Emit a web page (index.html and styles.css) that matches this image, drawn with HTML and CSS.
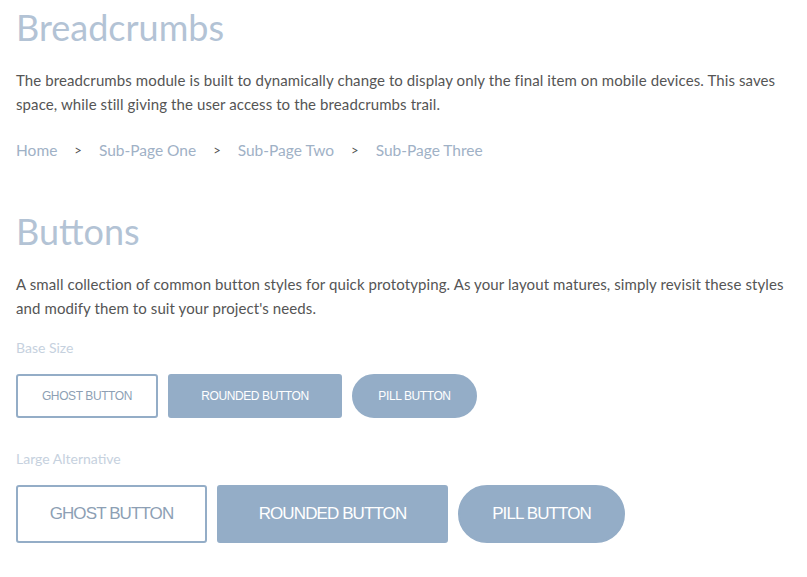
FILE: index.html
```html
<!DOCTYPE html>
<html lang="en">
<head>
    <meta charset="UTF-8">
    <meta name="viewport" content="width=device-width, initial-scale=1.0">
    <title>Breadcrumbs &amp; Buttons</title>
    <link rel="stylesheet" href="styles.css">
</head>
<body>

    <section class="module">
        <h1 class="module-title">Breadcrumbs</h1>
        <p class="module-text">The breadcrumbs module is built to dynamically change to display only the final item on mobile devices. This saves space, while still giving the user access to the breadcrumbs trail.</p>

        <nav class="breadcrumbs">
            <a href="#">Home</a>
            <span class="sep">&gt;</span>
            <a href="#">Sub-Page One</a>
            <span class="sep">&gt;</span>
            <a href="#">Sub-Page Two</a>
            <span class="sep">&gt;</span>
            <a href="#">Sub-Page Three</a>
        </nav>
    </section>

    <section class="module buttons-module">
        <h1 class="module-title">Buttons</h1>
        <p class="module-text">A small collection of common button styles for quick prototyping. As your layout matures, simply revisit these styles and modify them to suit your project's needs.</p>

        <h4 class="label">Base Size</h4>
        <div class="btn-row">
            <button class="btn btn-ghost">Ghost Button</button>
            <button class="btn btn-rounded">Rounded Button</button>
            <button class="btn btn-pill">Pill Button</button>
        </div>

        <h4 class="label">Large Alternative</h4>
        <div class="btn-row">
            <button class="btn btn-large btn-ghost">Ghost Button</button>
            <button class="btn btn-large btn-rounded">Rounded Button</button>
            <button class="btn btn-large btn-pill">Pill Button</button>
        </div>
    </section>

</body>
</html>
```

FILE: styles.css
```css
body {
    margin: 0;
    padding: 0 16px;
    background: #FFFFFF;
    font-family: Lato, "Open Sans", sans-serif;
    color: #555;
}
.module-title {
    margin: 0;
    padding-top: 7px;
    font-size: 36px;
    font-weight: 400;
    line-height: 40px;
    color: #b3c3d5;
}
.module-text {
    margin: 21px 0 0;
    font-size: 15px;
    letter-spacing: 0.1px;
    line-height: 24px;
    color: #555;
}
.breadcrumbs {
    display: flex;
    align-items: center;
    margin-top: 24px;
    font-size: 15.5px;
    line-height: 20px;
}
.breadcrumbs a {
    color: #9fb1c6;
    text-decoration: none;
}
.breadcrumbs .sep {
    margin: 0 17px;
    color: #555;
    font-size: 13px;
}
.buttons-module {
    margin-top: 44px;
}
.label {
    margin: 18px 0 0;
    font-size: 14px;
    font-weight: 400;
    line-height: 20px;
    color: #c6d1de;
}
.btn-row {
    display: flex;
    gap: 10px;
    margin-top: 16px;
    margin-bottom: 31px;
}
.btn {
    height: 44px;
    padding: 0 23px;
    border: 2px solid #94adc7;
    background: #94adc7;
    color: #FFFFFF;
    font-family: "Liberation Sans", Arial, sans-serif;
    font-size: 12px;
    letter-spacing: -0.4px;
    text-transform: uppercase;
    cursor: pointer;
}
.btn-ghost {
    width: 142px;
    padding: 0;
    background: #FFFFFF;
    color: #8d9fb4;
    border-radius: 3px;
}
.btn-rounded {
    width: 174px;
    border-radius: 3px;
}
.btn-pill {
    width: 125px;
    border-radius: 30px;
}
.btn-large {
    height: 58px;
    font-size: 17px;
    letter-spacing: -0.9px;
}
.btn-large.btn-ghost {
    width: 191px;
}
.btn-large.btn-rounded {
    width: 231px;
}
.btn-large.btn-pill {
    width: 167px;
}
```
